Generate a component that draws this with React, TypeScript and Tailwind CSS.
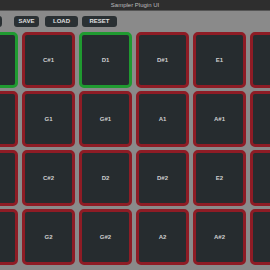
const notes = [
  ['C1', 'C#1', 'D1', 'D#1', 'E1', 'F1'],
  ['F#1', 'G1', 'G#1', 'A1', 'A#1', 'B1'],
  ['C2', 'C#2', 'D2', 'D#2', 'E2', 'F2'],
  ['F#2', 'G2', 'G#2', 'A2', 'A#2', 'B2'],
]

const active = ['C1', 'D1']

function Pad({ note }: { note: string }) {
  const on = active.includes(note)
  return (
    <div
      className={`h-[56px] w-[53px] rounded-[5px] border-[3px] bg-[#262c2f] flex items-center justify-center ${
        on ? 'border-[#1f9a30]' : 'border-[#8e1c25]'
      }`}
    >
      <span className="text-[6px] font-bold text-[#cfcfcf]">{note}</span>
    </div>
  )
}

export default function App() {
  return (
    <div className="h-[270px] w-[270px] overflow-hidden bg-[#8a8a8a] font-['Liberation_Sans',sans-serif]">
      {/* Title bar */}
      <div className="flex h-[11px] items-center justify-center bg-[#2e2e2e] border-b border-[#555]">
        <span className="text-[6px] text-[#bdbdbd]">Sampler Plugin UI</span>
      </div>

      {/* Toolbar */}
      <div className="ml-[-24px] mt-[5px] flex items-center">
        <button className="h-[11px] w-[26px] rounded-[3px] bg-[#2a3033] text-[6px] font-bold text-[#e0e0e0]">
          LOAD
        </button>
        <button className="ml-[12px] h-[11px] w-[25px] rounded-[3px] bg-[#2a3033] text-[6px] font-bold text-[#e0e0e0]">
          SAVE
        </button>
        <button className="ml-[6px] h-[11px] w-[33px] rounded-[3px] bg-[#2a3033] text-[6px] font-bold text-[#e0e0e0]">
          LOAD
        </button>
        <button className="ml-[4px] h-[11px] w-[35px] rounded-[3px] bg-[#2a3033] text-[6px] font-bold text-[#e0e0e0]">
          RESET
        </button>
      </div>

      {/* Pads */}
      <div className="ml-[-35px] mt-[5px] grid w-max grid-cols-[repeat(6,53px)] gap-x-[4px] gap-y-[3px]">
        {notes.flat().map((n) => (
          <Pad key={n} note={n} />
        ))}
      </div>
    </div>
  )
}
